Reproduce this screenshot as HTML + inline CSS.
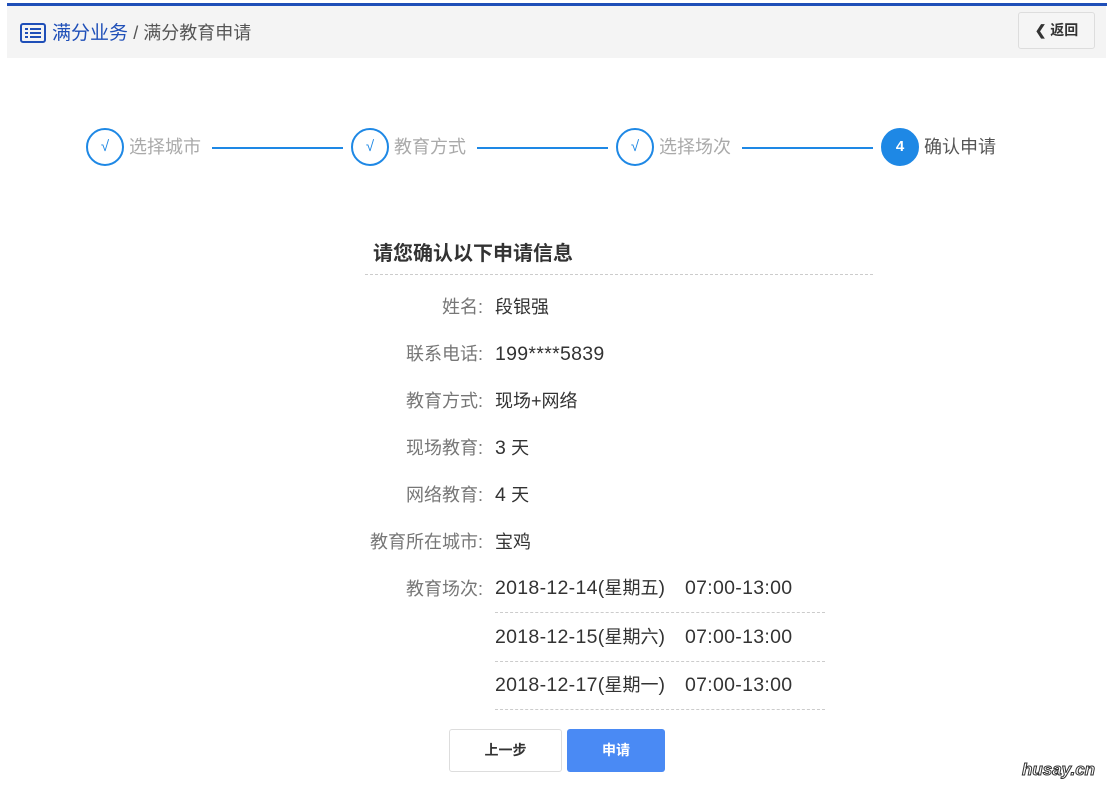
<!DOCTYPE html>
<html><head><meta charset="utf-8"><style>
*{margin:0;padding:0;box-sizing:border-box}
body{width:1115px;height:789px;background:#fff;font-family:"Liberation Sans","Noto Sans CJK SC",sans-serif;position:relative;overflow:hidden;color:#333}
.a{position:absolute;white-space:nowrap}
.bar{left:7px;top:3px;width:1100px;height:3px;background:#1f4fb8}
.hd{left:7px;top:6px;width:1099px;height:52px;background:#f4f4f4}
.back{left:1018px;top:12px;width:77px;height:37px;border:1px solid #ddd;border-radius:3px;background:#f5f5f5;font-size:14px;font-weight:bold;line-height:35px;text-align:center;color:#333}
.c{width:38px;height:38px;border-radius:50%;border:2px solid #1e88e5;color:#1e88e5;text-align:center;line-height:34px;font-size:15px}
.st{font-size:18px;color:#aaa;line-height:38px}
.ln{height:2px;background:#1e88e5;top:147px}
.lb{font-size:18px;color:#777;text-align:right;width:120px;left:363px;line-height:26px}
.v{font-size:18px;color:#333;left:495px;line-height:26px}
.n{font-size:19.5px;letter-spacing:0.3px}
.dl{border-top:1px dashed #ccc;left:495px;width:330px;height:0}
</style></head><body>
<div class="a bar"></div>
<div class="a hd"></div>
<svg class="a" style="left:20px;top:23px" width="26" height="20" viewBox="0 0 26 20"><rect x="1" y="1" width="24" height="18" rx="2" fill="none" stroke="#1f4fb8" stroke-width="2"/><rect x="5" y="5" width="3" height="2" fill="#1f4fb8"/><rect x="10" y="5" width="11" height="2" fill="#1f4fb8"/><rect x="5" y="9" width="3" height="2" fill="#1f4fb8"/><rect x="10" y="9" width="11" height="2" fill="#1f4fb8"/><rect x="5" y="13" width="3" height="2" fill="#1f4fb8"/><rect x="10" y="13" width="11" height="2" fill="#1f4fb8"/></svg>
<div class="a" style="left:52px;top:21px;font-size:19px;color:#1f4fb8;line-height:24px">满分业务 <span style="color:#555;font-size:18px">/ 满分教育申请</span></div>
<div class="a back">❮ 返回</div>

<div class="a c" style="left:86px;top:128px">√</div><div class="a st" style="left:129px;top:128px">选择城市</div>
<div class="a ln" style="left:212px;width:131px"></div>
<div class="a c" style="left:351px;top:128px">√</div><div class="a st" style="left:394px;top:128px">教育方式</div>
<div class="a ln" style="left:477px;width:131px"></div>
<div class="a c" style="left:616px;top:128px">√</div><div class="a st" style="left:659px;top:128px">选择场次</div>
<div class="a ln" style="left:742px;width:131px"></div>
<div class="a c" style="left:881px;top:128px;background:#1e88e5;color:#fff;font-weight:bold">4</div><div class="a st" style="left:924px;top:128px;color:#555">确认申请</div>

<div class="a" style="left:373px;top:237px;font-size:20px;font-weight:bold;color:#333">请您确认以下申请信息</div>
<div class="a" style="left:365px;top:274px;width:508px;border-top:1px dashed #ccc"></div>

<div class="a lb" style="top:294px">姓名:</div><div class="a v" style="top:294px">段银强</div>
<div class="a lb" style="top:341px">联系电话:</div><div class="a v n" style="top:341px">199****5839</div>
<div class="a lb" style="top:388px">教育方式:</div><div class="a v" style="top:388px">现场+网络</div>
<div class="a lb" style="top:435px">现场教育:</div><div class="a v" style="top:435px"><span class="n">3</span> 天</div>
<div class="a lb" style="top:482px">网络教育:</div><div class="a v" style="top:482px"><span class="n">4</span> 天</div>
<div class="a lb" style="top:529px;width:130px;left:353px">教育所在城市:</div><div class="a v" style="top:529px">宝鸡</div>
<div class="a lb" style="top:576px">教育场次:</div>
<div class="a v" style="top:575px"><span class="n">2018-12-14(</span>星期五<span class="n">)</span></div><div class="a v n" style="top:575px;left:685px">07:00-13:00</div>
<div class="a dl" style="top:612px"></div>
<div class="a v" style="top:624px"><span class="n">2018-12-15(</span>星期六<span class="n">)</span></div><div class="a v n" style="top:624px;left:685px">07:00-13:00</div>
<div class="a dl" style="top:661px"></div>
<div class="a v" style="top:672px"><span class="n">2018-12-17(</span>星期一<span class="n">)</span></div><div class="a v n" style="top:672px;left:685px">07:00-13:00</div>
<div class="a dl" style="top:709px"></div>

<div class="a" style="left:449px;top:729px;width:113px;height:43px;border:1px solid #ddd;border-radius:3px;text-align:center;line-height:41px;font-size:14px;font-weight:bold;color:#333">上一步</div>
<div class="a" style="left:567px;top:729px;width:98px;height:43px;border-radius:3px;background:#4a8af4;text-align:center;line-height:43px;font-size:14px;font-weight:bold;color:#fff">申请</div>
<div class="a" style="left:1022px;top:760px;font-size:17px;font-weight:bold;color:#fff;-webkit-text-stroke:1px #333;font-style:italic">husay.cn</div>
</body></html>
